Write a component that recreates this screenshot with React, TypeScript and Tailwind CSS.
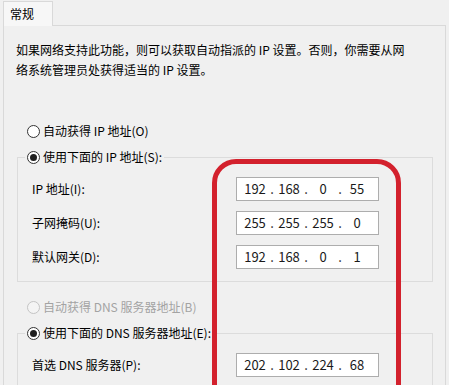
import type { ReactNode } from 'react'

const FONT = { fontFamily: '"Noto Sans CJK SC", "Noto Sans", sans-serif' }

function Radio({ checked = false, disabled = false }: { checked?: boolean; disabled?: boolean }) {
  return (
    <span
      className={`flex h-[13px] w-[13px] shrink-0 items-center justify-center rounded-full border ${
        disabled ? 'border-[#c4c4c4] bg-[#f4f4f4]' : 'border-[#333333] bg-white'
      }`}
    >
      {checked && <span className="h-[7px] w-[7px] rounded-full bg-[#1f1f1f]" />}
    </span>
  )
}

function RadioRow({ label, checked, disabled }: { label: string; checked?: boolean; disabled?: boolean }) {
  return (
    <div className="flex h-[20px] items-center gap-[3px]">
      <Radio checked={checked} disabled={disabled} />
      <span className={disabled ? 'text-[#a3a3a3]' : 'text-black'}>{label}</span>
    </div>
  )
}

function IpBox({ parts }: { parts: string[] }) {
  return (
    <div className="flex h-[24px] w-[143px] items-center border border-[#adadad] bg-white pl-[4px] text-[13px] text-[#1a1a1a]">
      {parts.map((p, i) => (
        <div key={i} className="flex items-center">
          <span className="w-[28px] text-center">{p}</span>
          {i < 3 && <span className="w-[6px] text-center">.</span>}
        </div>
      ))}
    </div>
  )
}

function FieldRow({ label, parts }: { label: string; parts: string[] }) {
  return (
    <div className="flex h-[24px] items-center">
      <span className="w-[204px] text-black">{label}</span>
      <IpBox parts={parts} />
    </div>
  )
}

function GroupBox({ legend, children }: { legend: ReactNode; children: ReactNode }) {
  return (
    <div className="ml-[13px] w-[416px] border border-[#dcdcdc]">
      <div className="-mt-[11px] ml-[7px] w-fit bg-[#f0f0f0] pl-[2px] pr-[2px]">{legend}</div>
      {children}
    </div>
  )
}

export default function App() {
  return (
    <div className="relative h-[385px] w-[449px] overflow-hidden bg-[#f0f0f0] pt-[1px] text-[12px] leading-[20px]" style={FONT}>
      {/* tab header */}
      <div className="relative z-10 -mb-[1px] ml-[3px] flex h-[25px] w-[50px] items-center border border-b-0 border-[#d9d9d9] bg-[#f7f7f7] pl-[6px] text-black">
        常规
      </div>

      {/* tab page */}
      <div className="ml-[3px] h-[400px] w-[443px] border border-b-0 border-[#d9d9d9] bg-[#f0f0f0]">
        <p className="whitespace-nowrap pl-[12px] pt-[14px] text-black">
          如果网络支持此功能，则可以获取自动指派的 IP 设置。否则，你需要从网
          <br />
          络系统管理员处获得适当的 IP 设置。
        </p>

        <div className="ml-[23px] mt-[41px]">
          <RadioRow label="自动获得 IP 地址(O)" />
        </div>

        <div className="mt-[16px]">
          <GroupBox legend={<RadioRow label="使用下面的 IP 地址(S):" checked />}>
            <div className="mt-[10px] flex flex-col gap-[10px] pb-[12px] pl-[14px]">
              <FieldRow label="IP 地址(I):" parts={['192', '168', '0', '55']} />
              <FieldRow label="子网掩码(U):" parts={['255', '255', '255', '0']} />
              <FieldRow label="默认网关(D):" parts={['192', '168', '0', '1']} />
            </div>
          </GroupBox>
        </div>

        <div className="ml-[23px] mt-[15px]">
          <RadioRow label="自动获得 DNS 服务器地址(B)" disabled />
        </div>

        <div className="mt-[16px]">
          <GroupBox legend={<RadioRow label="使用下面的 DNS 服务器地址(E):" checked />}>
            <div className="mt-[10px] flex flex-col gap-[10px] pb-[24px] pl-[14px]">
              <FieldRow label="首选 DNS 服务器(P):" parts={['202', '102', '224', '68']} />
            </div>
          </GroupBox>
        </div>
      </div>

      {/* red highlight ring */}
      <div className="pointer-events-none absolute left-[212px] top-[159px] h-[260px] w-[189px] rounded-[24px] border-[5px] border-[#d3212d]" />
    </div>
  )
}
